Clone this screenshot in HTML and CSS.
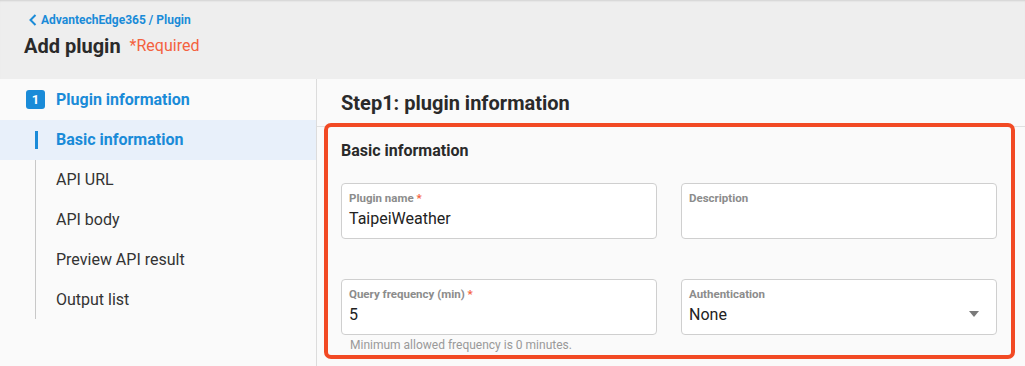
FILE: index.html
```html
<!DOCTYPE html>
<html>
<head>
<meta charset="utf-8">
<link rel="stylesheet" href="styles.css">
</head>
<body>
<header class="topbar">
  <a class="crumb">
    <svg class="chev" width="10" height="12" viewBox="0 0 10 12"><path d="M7.5 1 L2.5 6 L7.5 11" fill="none" stroke="#1a8bd8" stroke-width="2"/></svg>
    <span>AdvantechEdge365 / Plugin</span>
  </a>
  <div class="title-row">
    <h1>Add plugin</h1>
    <span class="req">*Required</span>
  </div>
</header>
<div class="body">
  <nav class="sidebar">
    <div class="step">
      <span class="badge">1</span>
      <span class="step-title">Plugin information</span>
    </div>
    <ul class="steps">
      <li class="active">Basic information</li>
      <li>API URL</li>
      <li>API body</li>
      <li>Preview API result</li>
      <li>Output list</li>
    </ul>
  </nav>
  <main class="main">
    <div class="main-head">Step1: plugin information</div>
    <section class="card">
      <h2>Basic information</h2>
      <div class="grid">
        <div class="cell">
          <div class="field">
            <div class="label">Plugin name <span class="star">*</span></div>
            <div class="value">TaipeiWeather</div>
          </div>
        </div>
        <div class="cell">
          <div class="field">
            <div class="label">Description</div>
            <div class="value"></div>
          </div>
        </div>
        <div class="cell">
          <div class="field">
            <div class="label">Query frequency (min) <span class="star">*</span></div>
            <div class="value">5</div>
          </div>
          <div class="helper">Minimum allowed frequency is 0 minutes.</div>
        </div>
        <div class="cell">
          <div class="field select">
            <div class="label">Authentication</div>
            <div class="value">None</div>
            <span class="arrow"></span>
          </div>
        </div>
      </div>
    </section>
  </main>
</div>
</body>
</html>
```
FILE: styles.css
```css
* { box-sizing: border-box; }
html, body { margin: 0; padding: 0; }
body {
  font-family: Roboto, "Noto Sans", Arial, sans-serif;
  background: #fafafa;
  color: #333;
  width: 1025px;
  height: 366px;
  overflow: hidden;
}
.topbar {
  height: 79px;
  background: #eeeeee;
  box-shadow: inset 0 2px 2px -1px rgba(0,0,0,0.12);
  padding: 12px 0 0 28px;
}
.crumb {
  display: flex;
  align-items: center;
  gap: 3px;
  color: #1a8bd8;
  font-size: 12px;
  font-weight: 700;
  height: 15px;
}
.chev { display: block; }
.title-row {
  display: flex;
  align-items: center;
  gap: 9px;
  margin: 6px 0 0 -4px;
}
h1 {
  margin: 0;
  font-size: 20px;
  font-weight: 700;
  color: #2a2a2a;
  line-height: 26px;
}
.req {
  font-size: 16px;
  color: #f4623f;
  line-height: 20px;
}
.body {
  display: flex;
  height: 287px;
}
.sidebar {
  width: 317px;
  flex: none;
  border-right: 1px solid #dcdcdc;
  background: #fafafa;
}
.step {
  height: 41px;
  display: flex;
  align-items: center;
  padding-left: 26px;
  gap: 11px;
}
.badge {
  width: 19px;
  height: 19px;
  border-radius: 3px;
  background: #1a8bd8;
  color: #fff;
  font-size: 13px;
  font-weight: 700;
  display: flex;
  align-items: center;
  justify-content: center;
}
.step-title {
  color: #1a8bd8;
  font-size: 16px;
  font-weight: 700;
}
.steps {
  list-style: none;
  margin: 0;
  padding: 0;
  position: relative;
}
.steps::before {
  content: "";
  position: absolute;
  left: 35px;
  top: 0;
  height: 199px;
  width: 1px;
  background: #c8c8c8;
}
.steps li {
  height: 40px;
  display: flex;
  align-items: center;
  padding-left: 56px;
  padding-bottom: 1px;
  font-size: 16px;
  color: #333;
  position: relative;
}
.steps li.active {
  background: #e8f0fa;
  color: #1a8bd8;
  font-weight: 700;
}
.steps li.active::before {
  content: "";
  position: absolute;
  left: 35px;
  top: 11px;
  width: 3px;
  height: 18px;
  background: #1a8bd8;
}
.main {
  flex: 1;
  min-width: 0;
}
.main-head {
  height: 48px;
  border-bottom: 1px solid #e0e0e0;
  display: flex;
  align-items: center;
  padding: 0 0 0 24px;
  font-size: 20px;
  font-weight: 700;
  color: #2a2a2a;
}
.card {
  margin: -4px 10px 0 7px;
  border: 4px solid #f24a24;
  border-radius: 7px;
  padding: 13px 13px 0 13px;
  height: 236px;
  background: #fafafa;
  position: relative;
}
.card h2 {
  margin: 0;
  font-size: 16px;
  font-weight: 700;
  color: #2a2a2a;
  line-height: 22px;
}
.grid {
  display: grid;
  grid-template-columns: 316px 316px;
  column-gap: 24px;
  row-gap: 40px;
  margin-top: 21px;
}
.cell { position: relative; }
.field {
  height: 56px;
  border: 1px solid #cfcfcf;
  border-radius: 4px;
  background: #fff;
  padding: 7px 8px 0 7px;
  position: relative;
}
.label {
  font-size: 11.5px;
  font-weight: 700;
  color: #8c8c8c;
  line-height: 14px;
}
.star { color: #f4623f; }
.value {
  font-size: 16px;
  color: #222;
  line-height: 20px;
  margin-top: 4px;
  height: 20px;
}
.arrow {
  position: absolute;
  right: 17px;
  top: 31px;
  width: 0;
  height: 0;
  border-left: 5px solid transparent;
  border-right: 5px solid transparent;
  border-top: 6px solid #7a7a7a;
}
.helper {
  position: absolute;
  left: 9px;
  top: 59px;
  font-size: 12px;
  color: #999;
  line-height: 14px;
}
```
